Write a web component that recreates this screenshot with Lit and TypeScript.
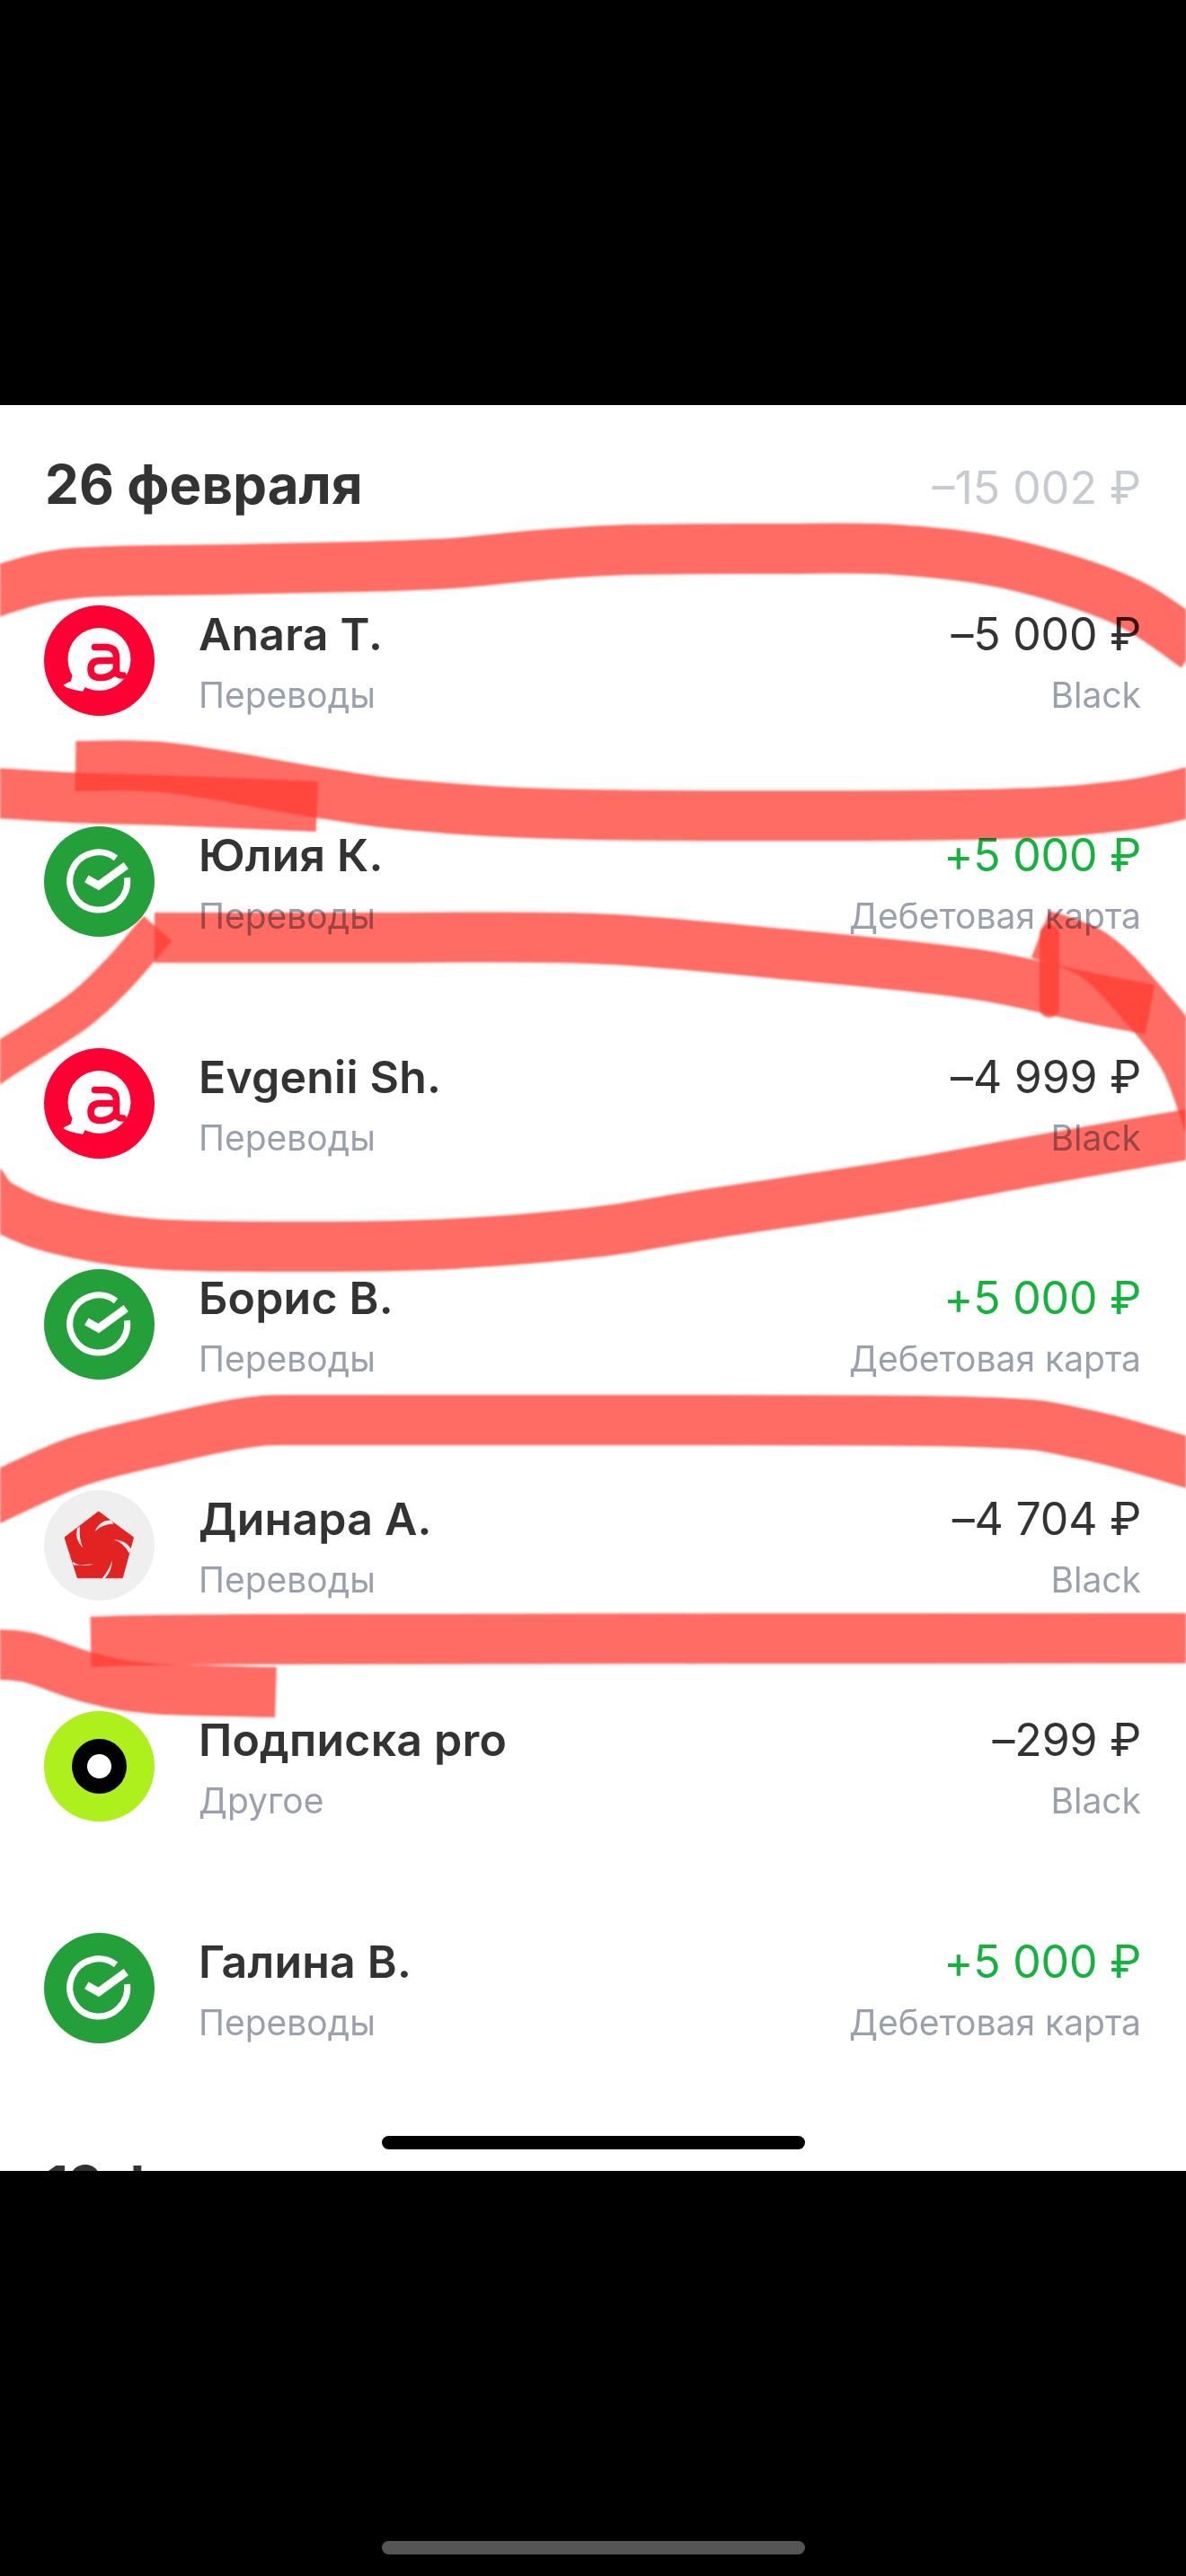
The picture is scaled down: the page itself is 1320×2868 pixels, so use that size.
import { LitElement, html, css, svg } from "lit";
import { customElement } from "lit/decorators.js";

type P = [number, number];

function spline(p: P[]): string {
  let d = `M${p[0][0]} ${p[0][1]}`;
  for (let i = 0; i < p.length - 1; i++) {
    const a = p[Math.max(i - 1, 0)], b = p[i], c = p[i + 1], e = p[Math.min(i + 2, p.length - 1)];
    const c1: P = [b[0] + (c[0] - a[0]) / 6, b[1] + (c[1] - a[1]) / 6];
    const c2: P = [c[0] - (e[0] - b[0]) / 6, c[1] - (e[1] - b[1]) / 6];
    d += ` C${c1[0].toFixed(1)} ${c1[1].toFixed(1)} ${c2[0].toFixed(1)} ${c2[1].toFixed(1)} ${c[0]} ${c[1]}`;
  }
  return d;
}

const MARKS: P[][] = [
  [[-30, 672], [0, 657], [84, 638], [252, 634], [400, 631], [505, 627], [600, 618], [700, 612], [860, 611], [997, 612], [1123, 628], [1249, 668], [1330, 720]],
  [[84, 853], [190, 855], [358, 883], [463, 897], [660, 907], [1081, 907], [1249, 897], [1340, 878]],
  [[-20, 882], [80, 888], [210, 892], [353, 898]],
  [[172, 1044], [400, 1044], [660, 1045], [870, 1062], [1081, 1084], [1207, 1110], [1280, 1124]],
  [[1158, 1040], [1217, 1063], [1268, 1113], [1318, 1178], [1345, 1250]],
  [[-20, 1320], [0, 1342], [60, 1367], [170, 1385], [350, 1388], [500, 1385], [660, 1372], [786, 1352], [997, 1320], [1165, 1290], [1340, 1260]],
  [[-20, 1676], [0, 1665], [84, 1628], [168, 1606], [274, 1584], [360, 1581], [660, 1581], [1081, 1583], [1207, 1597], [1335, 1632]],
  [[101, 1828], [295, 1825], [1330, 1824]],
  [[-20, 1842], [30, 1845], [100, 1868], [170, 1880], [307, 1884]],
];

const DIAGONAL: P[] = [[-20, 1198], [0, 1182], [84, 1128], [130, 1086], [165, 1046], [176, 1034]];

type Kind = "alfa" | "sber" | "star" | "pro";
interface Tx { kind: Kind; name: string; sub: string; amount: string; tag: string; plus?: boolean }

const ROWS: Tx[] = [
  { kind: "alfa", name: "Anara T.", sub: "Переводы", amount: "–5 000 ₽", tag: "Black" },
  { kind: "sber", name: "Юлия К.", sub: "Переводы", amount: "+5 000 ₽", tag: "Дебетовая карта", plus: true },
  { kind: "alfa", name: "Evgenii Sh.", sub: "Переводы", amount: "–4 999 ₽", tag: "Black" },
  { kind: "sber", name: "Борис В.", sub: "Переводы", amount: "+5 000 ₽", tag: "Дебетовая карта", plus: true },
  { kind: "star", name: "Динара А.", sub: "Переводы", amount: "–4 704 ₽", tag: "Black" },
  { kind: "pro", name: "Подписка pro", sub: "Другое", amount: "–299 ₽", tag: "Black" },
  { kind: "sber", name: "Галина В.", sub: "Переводы", amount: "+5 000 ₽", tag: "Дебетовая карта", plus: true },
];

function avatar(kind: Kind) {
  if (kind === "alfa") {
    return svg`<svg class="ava" viewBox="0 0 123 123">
      <circle cx="61.5" cy="61.5" r="61.5" fill="#ff0033"/>
      <circle cx="61.5" cy="60" r="35" fill="#fff"/>
      <path d="M32 79 L30.5 85 Q26 87 22.5 89 Q28 93 43 95 L50 80 Z" fill="#fff" stroke="#fff" stroke-width="1.5" stroke-linejoin="round"/>
      <path d="M56.5 46.5 H68 Q80.5 46.5 80.5 58 V72 Q80.5 78.5 88 78" fill="none" stroke="#ff0033" stroke-width="7.5" stroke-linecap="round"/>
      <path d="M80 61.5 H63 Q52 61.5 52 71 Q52 80.5 63 80.5 Q74 80.5 80 72" fill="none" stroke="#ff0033" stroke-width="7.5"/>
    </svg>`;
  }
  if (kind === "sber") {
    return svg`<svg class="ava" viewBox="0 0 123 123">
      <circle cx="61.5" cy="61.5" r="61.5" fill="#23a03a"/>
      <path d="M92.5 57.1 A32 32 0 1 1 80 35.4" fill="none" stroke="#fff" stroke-width="7"/>
      <path d="M47.3 58.3 L60.7 66 L91.3 43.7" fill="none" stroke="#fff" stroke-width="9"/>
    </svg>`;
  }
  if (kind === "star") {
    return svg`<svg class="ava" viewBox="0 0 123 123">
      <circle cx="61.5" cy="61.5" r="61.5" fill="#efefef"/>
      <path d="M60.7 24 L99.5 52.7 L87.3 97.7 H37.3 L23 52.7 Z" fill="#e32322" stroke="#e32322" stroke-width="1" stroke-linejoin="round"/>
      <g fill="#efefef">
        <path d="M37 42.5 Q33.5 55 43.3 64.3 Q38.5 53 40 40.5 Z"/>
        <path d="M75 33.5 Q62 33 56.7 46 Q64 38 77.5 37.5 Z"/>
        <path d="M97.5 66 Q91 55.5 77.3 55 Q88 58 94.5 70 Z"/>
        <path d="M67.5 98.5 Q76 90 75.7 78.3 Q72.5 89 64.5 98.5 Z"/>
        <path d="M31.5 79.5 Q43 87 55.7 82 Q44 83.5 33 83.5 Z"/>
      </g>
    </svg>`;
  }
  return svg`<svg class="ava" viewBox="0 0 123 123">
    <circle cx="61.5" cy="61.5" r="61.5" fill="#aef01c"/>
    <circle cx="61.5" cy="61.5" r="30.5" fill="#000"/>
    <circle cx="61.5" cy="61.5" r="13.5" fill="#fff"/>
  </svg>`;
}

@customElement("app-root")
export class AppRoot extends LitElement {
  static styles = css`
    :host { display: block; width: 1320px; height: 2868px; background: #000; font-family: Inter, "Noto Sans", sans-serif; overflow: hidden; }
    .page { display: flex; flex-direction: column; height: 2868px; }
    .top { height: 451px; flex: none; }
    .panel { position: relative; height: 1966px; flex: none; background: #fff; overflow: hidden; color: #333; filter: blur(0.5px); }
    .head { height: 161px; box-sizing: border-box; padding: 58px 50px 0 50px; display: flex; justify-content: space-between; align-items: baseline; }
    .next { margin-top: 9px; }
    .date { font-size: 60px; line-height: 60px; font-weight: 700; letter-spacing: 0.1px; white-space: nowrap; }
    .total { font-size: 50px; line-height: 60px; color: #c6cad1; white-space: nowrap; letter-spacing: 0; }
    .row { height: 246.3px; box-sizing: border-box; padding: 62px 50px 0 49px; display: flex; gap: 49px; }
    .ava { width: 123px; height: 123px; flex: none; display: block; }
    .info { flex: 1; display: flex; justify-content: space-between; }
    .col { display: flex; flex-direction: column; }
    .right { align-items: flex-end; }
    .name { font-size: 50px; line-height: 64px; font-weight: 600; white-space: nowrap; letter-spacing: 0.2px; }
    .sub { font-size: 39px; line-height: 56px; margin-top: 8px; color: #9aa1ad; white-space: nowrap; }
    .amt { font-size: 50px; line-height: 64px; white-space: nowrap; letter-spacing: -0.2px; }
    .plus { color: #12b53c; }
    .bar { position: absolute; left: 425px; width: 471px; height: 15px; border-radius: 8px; background: #000; }
    .bar1 { top: 1927px; }
    .marks { position: absolute; left: 0; top: 0; width: 1320px; height: 1966px; mix-blend-mode: multiply; filter: blur(1.2px); pointer-events: none; }
    .mark { fill: none; stroke: #ff3b30; stroke-opacity: 0.75; stroke-width: 56; stroke-linejoin: round; }
    .diag { stroke-width: 42; }
    .thin { stroke-width: 22; stroke-linecap: round; }
    .bottom { flex: 1; display: flex; justify-content: center; padding-top: 412px; box-sizing: border-box; }
    .home { width: 471px; height: 15px; border-radius: 8px; background: #555; }
  `;

  render() {
    return html`<div class="page">
      <div class="top"></div>
      <div class="panel">
        <div class="head"><span class="date">26 февраля</span><span class="total">–15 002 ₽</span></div>
        ${ROWS.map((r) => html`<div class="row">
          ${avatar(r.kind)}
          <div class="info">
            <div class="col"><span class="name">${r.name}</span><span class="sub">${r.sub}</span></div>
            <div class="col right"><span class="amt ${r.plus ? "plus" : ""}">${r.amount}</span><span class="sub">${r.tag}</span></div>
          </div>
        </div>`)}
        <div class="head next"><span class="date">19 февраля</span></div>
        <svg class="marks" viewBox="0 451 1320 1966">
          ${MARKS.map((m) => svg`<path class="mark" d=${spline(m)}/>`)}
          <path class="mark diag" d=${spline(DIAGONAL)}/>
          <path class="mark thin" d="M1168 1040 V1122"/>
        </svg>
        <div class="bar bar1"></div>
      </div>
      <div class="bottom"><div class="home"></div></div>
    </div>`;
  }
}
